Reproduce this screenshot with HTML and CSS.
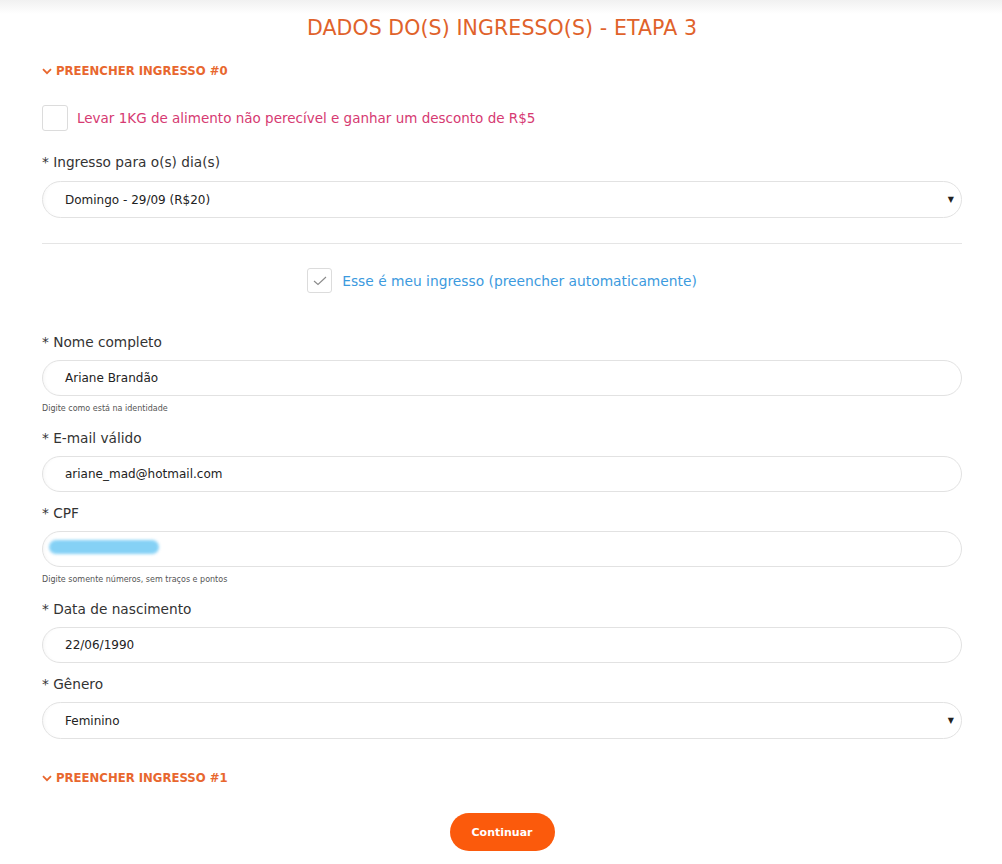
FILE: index.html
```html
<!DOCTYPE html>
<html lang="pt-BR">
<head>
<meta charset="utf-8">
<title>Dados do(s) ingresso(s)</title>
<link rel="stylesheet" href="styles.css">
</head>
<body>
<div class="topshade"></div>
<main class="page">
  <h1 class="title">DADOS DO(S) INGRESSO(S) - ETAPA 3</h1>

  <div class="section-head">
    <svg class="chev" viewBox="0 0 10 7" width="10" height="7"><path d="M1 1.2 L5 5.2 L9 1.2" fill="none" stroke="currentColor" stroke-width="1.8"/></svg>
    <span>PREENCHER INGRESSO #0</span>
  </div>

  <label class="check-row food">
    <span class="box"></span>
    <span class="food-text">Levar 1KG de alimento não perecível e ganhar um desconto de R$5</span>
  </label>

  <div class="field day">
    <div class="label">* Ingresso para o(s) dia(s)</div>
    <div class="select"><span>Domingo - 29/09 (R$20)</span><span class="arrow">▼</span></div>
  </div>

  <hr class="sep">

  <label class="check-row mine">
    <span class="box checked">
      <svg viewBox="0 0 14 10" width="14" height="10"><path d="M1 5 L5 8.5 L13 1" fill="none" stroke="#8a8a8a" stroke-width="1.1"/></svg>
    </span>
    <span class="mine-text">Esse é meu ingresso (preencher automaticamente)</span>
  </label>

  <div class="field first">
    <div class="label">* Nome completo</div>
    <div class="input">Ariane Brandão</div>
    <div class="help">Digite como está na identidade</div>
  </div>

  <div class="field after-help">
    <div class="label">* E-mail válido</div>
    <div class="input">ariane_mad@hotmail.com</div>
  </div>

  <div class="field">
    <div class="label">* CPF</div>
    <div class="input cpf"><span class="blur"></span></div>
    <div class="help">Digite somente números, sem traços e pontos</div>
  </div>

  <div class="field after-help">
    <div class="label">* Data de nascimento</div>
    <div class="input">22/06/1990</div>
  </div>

  <div class="field">
    <div class="label">* Gênero</div>
    <div class="select"><span>Feminino</span><span class="arrow">▼</span></div>
  </div>

  <div class="section-head second">
    <svg class="chev" viewBox="0 0 10 7" width="10" height="7"><path d="M1 1.2 L5 5.2 L9 1.2" fill="none" stroke="currentColor" stroke-width="1.8"/></svg>
    <span>PREENCHER INGRESSO #1</span>
  </div>

  <div class="actions">
    <button class="btn">Continuar</button>
  </div>
</main>
</body>
</html>
```

FILE: styles.css
```css
html, body {
  margin: 0;
  padding: 0;
  background: #fff;
}
body {
  font-family: "DejaVu Sans", "Noto Sans", sans-serif;
  color: #333;
  position: relative;
}
.topshade {
  position: absolute;
  left: 0; right: 0; top: 0;
  height: 14px;
  background: linear-gradient(#f1f1f1, #ffffff);
}
.page {
  position: relative;
  width: 920px;
  margin: 0 0 0 42px;
  padding-top: 13px;
}
.title {
  margin: 0;
  text-align: center;
  font-weight: normal;
  font-size: 20.5px;
  line-height: 30px;
  color: #e0622b;
  letter-spacing: 0.1px;
}
.section-head {
  margin-top: 18px;
  display: flex;
  align-items: center;
  gap: 4px;
  height: 20px;
  color: #e8672e;
  font-weight: bold;
  font-size: 11.7px;
}
.section-head .chev { flex: none; margin-top: 1px; }
.check-row {
  display: flex;
  align-items: center;
  gap: 9px;
}
.box {
  box-sizing: border-box;
  width: 26px;
  height: 26px;
  border: 1px solid #dcdcdc;
  border-radius: 3px;
  display: flex;
  align-items: center;
  justify-content: center;
  flex: none;
}
.food {
  margin-top: 24px;
}
.food-text {
  color: #d63a72;
  font-size: 13.5px;
}
.field {
  margin-top: 11px;
}
.field.day {
  margin-top: 21px;
}
.label {
  font-size: 13.7px;
  line-height: 20px;
  color: #333;
}
.input, .select {
  box-sizing: border-box;
  margin-top: 8px;
  height: 36px;
  border: 1px solid #e2e2e2;
  border-radius: 19px;
  padding: 0 22px;
  display: flex;
  align-items: center;
  font-size: 12px;
  color: #222;
  box-shadow: inset 3px 0 4px -3px rgba(0,0,0,0.06);
}
.select {
  height: 37px;
  justify-content: space-between;
  padding-right: 7px;
}
.field.day .select {
  margin-top: 9px;
}
.arrow {
  font-size: 8px;
  color: #222;
}
.sep {
  margin: 25px 0 0 0;
  border: 0;
  border-top: 1px solid #e5e5e5;
}
.mine {
  margin-top: 24px;
  justify-content: center;
  gap: 10px;
}
.mine .box {
  width: 25px;
  height: 25px;
}
.mine-text {
  color: #3c9ade;
  font-size: 13.8px;
}
.field.first {
  margin-top: 39px;
}
.field.after-help {
  margin-top: 13px;
}
.help {
  margin-top: 7px;
  font-size: 8px;
  line-height: 12px;
  color: #555;
}
.cpf { position: relative; }
.blur {
  position: absolute;
  left: 6px;
  top: 8px;
  width: 110px;
  height: 14px;
  border-radius: 8px;
  background: #7fcff5;
  filter: blur(1.5px);
  opacity: 0.95;
}
.section-head.second {
  margin-top: 29px;
}
.actions {
  display: flex;
  justify-content: center;
  margin-top: 25px;
  padding-bottom: 14px;
}
.btn {
  width: 105px;
  height: 38px;
  border: 0;
  border-radius: 19px;
  background: #fb5a0c;
  color: #fff;
  font-family: "DejaVu Sans", sans-serif;
  font-weight: bold;
  font-size: 11px;
}
```
